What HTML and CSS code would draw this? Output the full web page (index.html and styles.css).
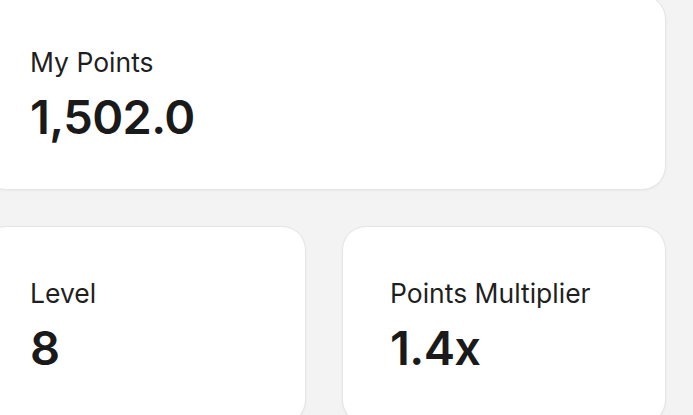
FILE: index.html
```html
<!DOCTYPE html>
<html lang="en">
<head>
<meta charset="utf-8">
<title>Points</title>
<link rel="stylesheet" href="styles.css">
</head>
<body>
<main class="stats">
  <section class="card card--wide">
    <div class="card__label">My Points</div>
    <div class="card__value">1,502.0</div>
  </section>
  <section class="card">
    <div class="card__label">Level</div>
    <div class="card__value">8</div>
  </section>
  <section class="card">
    <div class="card__label">Points Multiplier</div>
    <div class="card__value">1.4x</div>
  </section>
</main>
</body>
</html>
```
FILE: styles.css
```css
html, body {
  margin: 0;
  padding: 0;
  background: #f3f3f3;
  font-family: Inter, "Noto Sans", sans-serif;
  color: #1b1b1b;
  overflow: hidden;
}

.stats {
  display: grid;
  grid-template-columns: 324px 324px;
  gap: 36px;
  margin-left: -18px;
  margin-top: -5px;
}

.card {
  background: #ffffff;
  border: 1px solid #e4e4e4;
  border-radius: 24px;
  padding: 48px 47px 48px 47px;
  box-shadow: 0 1px 3px rgba(0, 0, 0, 0.04);
  height: 198px;
  box-sizing: border-box;
}

.card--wide {
  grid-column: 1 / 3;
  height: auto;
  padding-bottom: 49px;
}

.card__label {
  font-size: 26.5px;
  line-height: 36px;
  font-weight: 400;
  color: #1f1f1f;
}

.card__value {
  font-size: 47px;
  line-height: 47px;
  font-weight: 600;
  margin-top: 13px;
  color: #1a1a1a;
  letter-spacing: -0.6px;
}
```
